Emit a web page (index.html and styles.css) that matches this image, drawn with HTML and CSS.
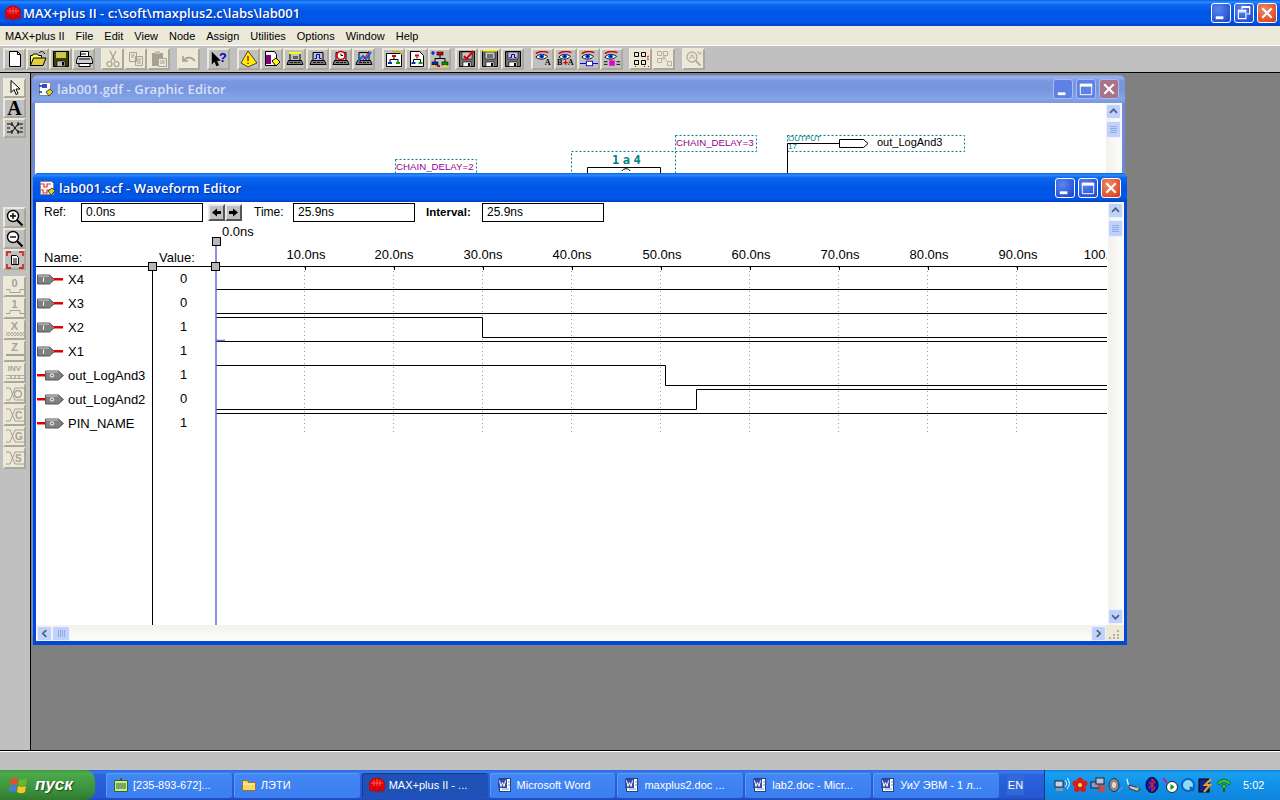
FILE: index.html
```html
<!DOCTYPE html>
<html lang="en">
<head>
    <meta charset="UTF-8">
    <title>MAX+plus II</title>
    <link rel="stylesheet" href="styles.css">
</head>
<body>

<!-- shared icon parts -->
<svg class="defs" width="0" height="0">
    <symbol id="i-chip" viewBox="0 0 16 16">
        <path d="M0 9C0 3 4 1 8 1s8 2 8 8l-1 5h-3l-1-4-1 5H6L5 10l-1 4H1z" fill="#e80000" stroke="#a00000" stroke-width=".5"/>
        <path d="M5 3v6M8 2v7M11 3v6M2 6h12" stroke="#ff8080" stroke-width=".7"/>
    </symbol>
    <symbol id="w-min" viewBox="0 0 19 19"><rect x="4" y="13" width="8" height="3" fill="#fff"/></symbol>
    <symbol id="w-max" viewBox="0 0 19 19"><path d="M3.500 4.500h12v11h-12z" fill="none" stroke="#fff"/><rect x="3" y="4" width="13" height="3" fill="#fff"/></symbol>
    <symbol id="w-restore" viewBox="0 0 19 19"><path d="M3.500 8.500h8v7h-8zM7.500 5.500v-2h8v7h-3" fill="none" stroke="#fff" stroke-width="1.200"/><path d="M3 7h9M7 3h9" stroke="#fff" stroke-width="2"/></symbol>
    <symbol id="w-close" viewBox="0 0 19 19"><path d="M4.500 4.500l10 10M14.500 4.500l-10 10" stroke="#fff" stroke-width="2.200"/></symbol>
    <symbol id="i-device" viewBox="0 0 18 18">
        <path d="M4 2.500h10v8H4z" fill="#c0c0c0" stroke="#000"/>
        <path d="M2.500 10.500h13l1.500 4H1z" fill="#808080" stroke="#000"/>
        <path d="M4 12.500h3M8 12.500h3M12 12.500h2" stroke="#111"/>
    </symbol>
    <symbol id="i-floppy" viewBox="0 0 18 18">
        <path d="M1.500 1.500h15v15h-15z" fill="#707070" stroke="#000"/>
        <rect x="4" y="2" width="10" height="7" fill="#c8c8c8" stroke="#000" stroke-width=".6"/>
        <rect x="5" y="12" width="8" height="4.500" fill="#fff" stroke="#000" stroke-width=".6"/>
        <rect x="10" y="13" width="2" height="3" fill="#000"/>
    </symbol>
    <symbol id="i-eye" viewBox="0 0 20 18">
        <path d="M2 3C6 0 12 0 16 2" fill="none" stroke="#d00000" stroke-width="1.600"/>
        <path d="M2 7C5 3 11 3 15 6c-3 4-9 4-13 1z" fill="#fff" stroke="#000"/>
        <circle cx="8.500" cy="6" r="2.600" fill="#0050e0"/><circle cx="8.500" cy="6" r="1" fill="#000"/>
    </symbol>
    <symbol id="i-tree" viewBox="0 0 18 18">
        <path d="M9 5v3M4 12V8.500h10V12" fill="none" stroke="#000"/>
        <rect x="6" y="2" width="6" height="3" fill="#e00000" stroke="#000" stroke-width=".6"/>
        <rect x="1" y="12" width="6" height="3" fill="#0030c0" stroke="#000" stroke-width=".6"/>
        <rect x="11" y="12" width="6" height="3" fill="#00a000" stroke="#000" stroke-width=".6"/>
    </symbol>
    <symbol id="i-word" viewBox="0 0 16 16">
        <rect x="2.500" y="1.500" width="11" height="13" fill="#fff" stroke="#29427e"/>
        <path d="M1 2h9v9H1z" fill="#2b4da8"/>
        <path d="M2.500 3.500l1.500 6 1.500-4 1.500 4 1.500-6" fill="none" stroke="#fff"/>
        <path d="M5 12h7M11 5h2M11 8h2" stroke="#7f8fb8"/>
    </symbol>
    <symbol id="p-in" viewBox="0 0 27 11">
        <path d="M.5 1h12l5 4.500-5 4.500H.5z" fill="#808080" stroke="#555"/>
        <path d="M1 2h11" stroke="#d0d0d0"/><path d="M6.500 3.500v4" stroke="#fff"/>
        <rect x="17" y="4" width="9" height="2.500" fill="#e00000"/>
    </symbol>
    <symbol id="p-out" viewBox="0 0 27 11">
        <rect x="0" y="4" width="9" height="2.500" fill="#e00000"/>
        <path d="M8.500 1h13l5 4.500-5 4.500h-13z" fill="#808080" stroke="#555"/>
        <path d="M9 2h12" stroke="#d0d0d0"/>
        <ellipse cx="15" cy="5.500" rx="1.800" ry="1.600" fill="none" stroke="#fff"/>
    </symbol>
</svg>

<header class="app-title">
    <svg class="ico16"><use href="#i-chip"/></svg>
    <span class="app-title-text">MAX+plus II - c:\soft\maxplus2.c\labs\lab001</span>
    <div class="win-btns">
        <a class="wbtn"><svg><use href="#w-min"/></svg></a>
        <a class="wbtn"><svg><use href="#w-restore"/></svg></a>
        <a class="wbtn close"><svg><use href="#w-close"/></svg></a>
    </div>
</header>

<nav class="menubar">
    <a>MAX+plus II</a><a>File</a><a>Edit</a><a>View</a><a>Node</a><a>Assign</a><a>Utilities</a><a>Options</a><a>Window</a><a>Help</a>
</nav>

<section class="toolbar">
    <div class="tb-group">
        <a class="tbtn"><svg viewBox="0 0 18 18"><path d="M3.500 1.500h8l3 3v12h-11z" fill="#fff" stroke="#000"/><path d="M11.500 1.500v3h3" fill="none" stroke="#000"/></svg></a>
        <a class="tbtn"><svg viewBox="0 0 18 18"><path d="M1.500 15.500v-10h2l1-1.500h4l1 1.500h3v2" fill="#ffff60" stroke="#000"/><path d="M1.500 15.500l3-7.500h12.500l-3 7.500z" fill="#e0d040" stroke="#000"/><path d="M10 3c2-2 4-2 5 0l1 1" fill="none" stroke="#000"/></svg></a>
        <a class="tbtn"><svg viewBox="0 0 18 18"><path d="M1.500 1.500h15v15h-15z" fill="#404000" stroke="#000"/><rect x="4" y="2" width="10" height="6" fill="#c8c850"/><rect x="5" y="11" width="8" height="5.500" fill="#c0c0c0" stroke="#000" stroke-width=".6"/><rect x="10" y="12" width="2" height="3.500" fill="#000"/></svg></a>
        <a class="tbtn"><svg viewBox="0 0 18 18"><path d="M5.500 1.500h8v5h-8z" fill="#fff" stroke="#000"/><path d="M3 6.500h13l1.500 4v3h-16v-3z" fill="#d0d0d0" stroke="#000"/><path d="M4 9h11M5 4h6" stroke="#000"/><path d="M4 13.500h11v3H4z" fill="#fff" stroke="#000"/></svg></a>
    </div>
    <div class="tb-group gap6">
        <a class="tbtn off"><svg viewBox="0 0 18 18"><path d="M6 1l5 10M12 1L7 11" stroke="#a5a293" fill="none" stroke-width="1.200"/><circle cx="5.500" cy="14" r="2.500" fill="none" stroke="#a5a293" stroke-width="1.200"/><circle cx="12.500" cy="14" r="2.500" fill="none" stroke="#a5a293" stroke-width="1.200"/></svg></a>
        <a class="tbtn off"><svg viewBox="0 0 18 18"><path d="M2.500 2.500h7v9h-7zM8.500 6.500h7v9h-7z" fill="#ece9d8" stroke="#a5a293"/><path d="M4 5h4M4 7h3M10 9h4M10 11h4M10 13h4" stroke="#a5a293"/></svg></a>
        <a class="tbtn off"><svg viewBox="0 0 18 18"><path d="M2 3h11v13H2z" fill="#a5a293"/><rect x="5" y="1" width="5" height="3" fill="#c5c2b3"/><path d="M8.500 8.500h8v8h-8z" fill="#ece9d8" stroke="#a5a293"/><path d="M10 11h5M10 13h5" stroke="#a5a293"/></svg></a>
    </div>
    <div class="tb-group">
        <a class="tbtn off"><svg viewBox="0 0 18 18"><path d="M3 6v5h5M3.500 11C6 7 11 6 15 11" fill="none" stroke="#a5a293" stroke-width="1.600"/></svg></a>
    </div>
    <div class="tb-group">
        <a class="tbtn"><svg viewBox="0 0 20 18"><path d="M2 1v14l3-3 2 5 3-1-2-5h4z" fill="#000"/><text class="tb-help" x="10" y="12">?</text></svg></a>
    </div>
    <div class="tb-group">
        <a class="tbtn"><svg viewBox="0 0 18 18"><path d="M8 1l9 12-9 4-7-4z" fill="#ffee00" stroke="#444"/><path d="M8 6v5M8 12.500v1.500" stroke="#c00000" stroke-width="1.400"/></svg></a>
        <a class="tbtn"><svg viewBox="0 0 18 18"><path d="M2.500 1.500h9l2 3v11h-11z" fill="#fff" stroke="#000"/><rect x="3" y="5" width="5" height="9" fill="#800080"/><path d="M9 11l4-3 4 4-4 4z" fill="#ffff00" stroke="#000"/></svg></a>
        <a class="tbtn"><svg viewBox="0 0 18 18"><use href="#i-device"/><path d="M3 3h12" stroke="#ffff00" stroke-width="2"/><path d="M7 6h5v3H7z" fill="#606060"/></svg></a>
        <a class="tbtn"><svg viewBox="0 0 18 18"><use href="#i-device"/><path d="M5.500 8.500h2v-4h3v4h2" fill="none" stroke="#0000d0"/></svg></a>
        <a class="tbtn"><svg viewBox="0 0 18 18"><use href="#i-device"/><circle cx="9" cy="5.500" r="4" fill="#fff" stroke="#e00000" stroke-width="1.600"/><path d="M9 3.500v2h2" stroke="#000" fill="none"/></svg></a>
        <a class="tbtn"><svg viewBox="0 0 18 18"><use href="#i-device"/><path d="M3 11l5-5 3 3 5-7" fill="none" stroke="#0060f0" stroke-width="1.800"/><path d="M5 12l5-4 4-7" fill="none" stroke="#e00000"/></svg></a>
    </div>
    <div class="tb-group gap0">
        <a class="tbtn"><svg viewBox="0 0 18 18"><path d="M1.500 3.500h15v13h-15z" fill="#fff" stroke="#000"/><path d="M7 1.500h7l3 3" fill="none" stroke="#c8b400" stroke-width="1.400"/><path d="M9 7v2M5 12v-2.500h8V12" fill="none" stroke="#000"/><rect x="7" y="5" width="4" height="2" fill="#e00000"/><rect x="3" y="12" width="4" height="2" fill="#0030c0"/><rect x="11" y="12" width="4" height="2" fill="#00a000"/></svg></a>
        <a class="tbtn"><svg viewBox="0 0 18 18"><path d="M2.500 1.500h9l4 4v11h-13z" fill="#fff" stroke="#000"/><path d="M9 6.500v2M5.500 12v-2.500h7V12" fill="none" stroke="#000"/><rect x="7" y="4.500" width="4" height="2" fill="#e00000"/><rect x="3.500" y="12" width="4" height="2" fill="#0030c0"/><rect x="10.500" y="12" width="4" height="2" fill="#00a000"/></svg></a>
        <a class="tbtn"><svg viewBox="0 0 18 18"><use href="#i-tree"/><path d="M0 3h4M2 1v4" stroke="#0000e0" stroke-width="1.200"/><rect x="1" y="15" width="3" height="2" fill="#ffd000"/><rect x="6" y="15" width="3" height="2" fill="#e00000"/><rect x="12" y="15" width="4" height="2" fill="#ffd000"/></svg></a>
    </div>
    <div class="tb-group gap4">
        <a class="tbtn"><svg viewBox="0 0 18 18"><use href="#i-floppy"/><path d="M6 6l2.500 3L15 1" fill="none" stroke="#e00000" stroke-width="2"/></svg></a>
        <a class="tbtn"><svg viewBox="0 0 18 18"><use href="#i-floppy"/><path d="M2 1h14" stroke="#ffff00" stroke-width="1.400"/><path d="M6 4h6v4H6z" fill="#707070"/></svg></a>
        <a class="tbtn"><svg viewBox="0 0 18 18"><use href="#i-floppy"/><path d="M5.500 7.500h2v-3h3v3h2" fill="none" stroke="#0000d0"/></svg></a>
    </div>
    <div class="tb-group">
        <a class="tbtn"><svg viewBox="0 0 20 18"><use href="#i-eye"/><text class="tb-a" x="12" y="16">A</text></svg></a>
        <a class="tbtn"><svg viewBox="0 0 20 18"><use href="#i-eye"/><text class="tb-a" x="0" y="16">B</text><path d="M7 13h5M9.500 10.500v5" stroke="#e00000" stroke-width="1.600"/><text class="tb-a" x="12" y="16">A</text></svg></a>
        <a class="tbtn"><svg viewBox="0 0 20 18"><use href="#i-eye"/><path d="M0 14h7M14 14h6" stroke="#0000e0" stroke-width="1.200"/><rect x="7" y="11.500" width="7" height="5" fill="#fff" stroke="#0000e0"/></svg></a>
        <a class="tbtn"><svg viewBox="0 0 20 18"><use href="#i-eye"/><rect x="7" y="10.500" width="6" height="6" fill="#e000d0"/><path d="M1 12h4M1 15h4M15 12h4M15 15h4" stroke="#000"/></svg></a>
    </div>
    <div class="tb-group gap6">
        <a class="tbtn off"><svg viewBox="0 0 18 18"><path d="M2.500 2.500h4v4h-4zM9.500 2.500h4v4h-4zM2.500 10.500h4v4h-4zM9.500 10.500h4v4h-4z" fill="none" stroke="#000"/><path d="M15 7l2-1M15 9h2M3 17l1-1M12 16l1 1M16 16l1 1" stroke="#e00000"/></svg></a>
        <a class="tbtn off pale"><svg viewBox="0 0 18 18"><path d="M2.500 1.500h4v4h-4zM8.500 1.500h4v4h-4zM2.500 8.500h4v4h-4zM12.500 11.500h4v4h-4z" fill="none" stroke="#a5a293"/><path d="M8 7l4 4M8 7v3M8 7h3" stroke="#a5a293" fill="none"/></svg></a>
    </div>
    <div class="tb-group">
        <a class="tbtn off pale"><svg viewBox="0 0 18 18"><circle cx="7" cy="7" r="5" fill="none" stroke="#a5a293" stroke-width="1.400"/><path d="M10.500 10.500l5 5" stroke="#a5a293" stroke-width="2"/><path d="M4 8h2V5h2v3h2M12 2h2v2h2V2" fill="none" stroke="#a5a293"/></svg></a>
    </div>
</section>

<main class="workspace">
    <aside class="palette">
        <div class="pal-group first">
            <a class="tbtn off"><svg viewBox="0 0 18 18"><path d="M5 1.500v12l3-3 2 5 2-1-2-4.500h4z" fill="#fff" stroke="#000"/></svg></a>
            <a class="tbtn"><span class="pal-a">A</span></a>
            <a class="tbtn"><svg viewBox="0 0 18 18"><path d="M1 5h5l6 8h5M1 13h5l6-8h5M1 9h3M14 9h3" fill="none" stroke="#000"/><path d="M6 3v4M12 11v4M12 3v4M6 11v4" stroke="#000"/></svg></a>
        </div>
        <div class="pal-group second">
            <a class="tbtn"><svg viewBox="0 0 18 18"><circle cx="7" cy="7" r="5.500" fill="#fff" stroke="#000" stroke-width="1.400"/><path d="M11 11l5.500 5.500" stroke="#000" stroke-width="2.200"/><path d="M4 7h6M7 4v6" stroke="#000" stroke-width="1.400"/></svg></a>
            <a class="tbtn"><svg viewBox="0 0 18 18"><circle cx="7" cy="7" r="5.500" fill="#fff" stroke="#000" stroke-width="1.400"/><path d="M11 11l5.500 5.500" stroke="#000" stroke-width="2.200"/><path d="M4 7h6" stroke="#000" stroke-width="1.400"/></svg></a>
            <a class="tbtn"><svg viewBox="0 0 18 18"><path d="M5.500 4.500h5l2 2v7h-7z" fill="#fff" stroke="#000"/><path d="M7 8h4M7 10h4M7 12h4" stroke="#000"/><path d="M1 5V1h4M13 1h4v4M1 13v4h4M17 13v4h-4" fill="none" stroke="#e00000" stroke-width="1.400"/></svg></a>
        </div>
        <div class="pal-group third">
            <a class="tbtn off wave"><b>0</b><svg viewBox="0 0 18 6"><path d="M0 1.500h4v3h10v-3h4" fill="none" stroke="#a5a293"/></svg></a>
            <a class="tbtn off wave"><b>1</b><svg viewBox="0 0 18 6"><path d="M0 4.500h4v-3h10v3h4" fill="none" stroke="#a5a293"/></svg></a>
            <a class="tbtn off wave"><b>X</b><svg viewBox="0 0 18 6"><path d="M0 1l3 4 3-4 3 4 3-4 3 4 3-4M0 5l3-4 3 4 3-4 3 4 3-4 3 4" fill="none" stroke="#a5a293" stroke-width=".8"/></svg></a>
            <a class="tbtn off wave"><b>Z</b><svg viewBox="0 0 18 6"><path d="M0 3h18" stroke="#a5a293" stroke-width="2"/></svg></a>
            <a class="tbtn off wave"><b class="inv">INV</b><svg viewBox="0 0 18 6"><path d="M0 1.500h5v3h4v-3h4v3h5M0 4.500h5v-3h4v3h4v-3h5" fill="none" stroke="#a5a293" stroke-width=".8"/></svg></a>
            <a class="tbtn off"><svg viewBox="0 0 18 18"><path d="M0 3h4l5 12h9M0 15h4l5-12h9" fill="none" stroke="#a5a293"/><circle cx="12" cy="9" r="3.500" fill="none" stroke="#a5a293" stroke-width="1.400"/></svg></a>
            <a class="tbtn off"><svg viewBox="0 0 18 18"><path d="M0 3h4l5 12h9M0 15h4l5-12h9" fill="none" stroke="#a5a293"/><text class="pal-x" x="9" y="13">C</text></svg></a>
            <a class="tbtn off"><svg viewBox="0 0 18 18"><path d="M0 3h4l5 12h9M0 15h4l5-12h9" fill="none" stroke="#a5a293"/><text class="pal-x" x="9" y="13">G</text></svg></a>
            <a class="tbtn off"><svg viewBox="0 0 18 18"><path d="M0 3h4l5 12h9M0 15h4l5-12h9" fill="none" stroke="#a5a293"/><text class="pal-x" x="9" y="13">S</text></svg></a>
        </div>
    </aside>

    <div class="mdi">
        <!-- window behind -->
        <section class="win win-gdf inactive">
            <div class="win-title">
                <svg class="ico16" viewBox="0 0 16 16"><path d="M2.500 1.500h11v13h-11z" fill="#fff" stroke="#888"/><path d="M2 5h3M2 11h3" stroke="#0030c0" stroke-width="1.600"/><rect x="5" y="3" width="5" height="4" fill="#3050c0"/><path d="M9 11l4-3 3 3-4 4z" fill="#e0d020" stroke="#444"/></svg>
                <span class="win-title-text">lab001.gdf - Graphic Editor</span>
                <div class="win-btns">
                    <a class="wbtn"><svg><use href="#w-min"/></svg></a>
                    <a class="wbtn"><svg><use href="#w-max"/></svg></a>
                    <a class="wbtn close"><svg><use href="#w-close"/></svg></a>
                </div>
            </div>
            <div class="win-body">
                <svg class="gdf-canvas" viewBox="35 103 1071 530">
                    <g class="dots">
                        <rect x="395.500" y="159.500" width="81" height="30"/>
                        <rect x="571.500" y="151.500" width="104" height="40"/>
                        <rect x="675.500" y="135.500" width="81" height="16"/>
                        <rect x="787.500" y="135.500" width="177" height="16"/>
                    </g>
                    <text class="gdf-param" x="396" y="170">CHAIN_DELAY=2</text>
                    <text class="gdf-param" x="676" y="146">CHAIN_DELAY=3</text>
                    <text class="gdf-inst" x="612" y="164">1a4</text>
                    <path d="M587.500 190v-22.500h73V190M622 171c1-3 7-3 8 0" class="gdf-line"/>
                    <text class="gdf-pin" x="788" y="141">OUTPUT</text>
                    <text class="gdf-pin" x="788" y="149">17</text>
                    <path d="M787.500 190v-46.500h52M839.500 139.500h24l4.500 4-4.500 4h-24z" class="gdf-line"/>
                    <text class="gdf-name" x="877" y="146">out_LogAnd3</text>
                </svg>
                <div class="vscroll">
                    <a class="sbtn"><svg viewBox="0 0 15 15"><path d="M3.500 9l4-4 4 4" fill="none" stroke="#4d6185" stroke-width="2"/></svg></a>
                    <a class="sthumb"></a>
                </div>
            </div>
        </section>

        <!-- active window -->
        <section class="win win-scf">
            <div class="win-title">
                <svg class="ico16" viewBox="0 0 16 16"><path d="M1.500 1.500h11l2 2v11h-13z" fill="#fff" stroke="#888"/><path d="M2 4h3v3h3V4h4M2 10h2v3h4v-3h4" fill="none" stroke="#e03030" stroke-width="1.200"/><path d="M9 11l4-3 3 3-4 4z" fill="#e0d020" stroke="#444"/></svg>
                <span class="win-title-text">lab001.scf - Waveform Editor</span>
                <div class="win-btns">
                    <a class="wbtn"><svg><use href="#w-min"/></svg></a>
                    <a class="wbtn"><svg><use href="#w-max"/></svg></a>
                    <a class="wbtn close"><svg><use href="#w-close"/></svg></a>
                </div>
            </div>
            <div class="win-body column">
                <div class="scf-main">
                    <div class="wave-pane">
                        <div class="refbar">
                            <label class="lbl-ref">Ref:</label>
                            <div class="field">0.0ns</div>
                            <a class="step"><svg viewBox="0 0 13 13"><path d="M2 6.500l5-4v2.500h4v3H7v2.500z"/></svg></a>
                            <a class="step"><svg viewBox="0 0 13 13"><path d="M11 6.500l-5-4v2.500H2v3h4v2.500z"/></svg></a>
                            <label class="lbl-time">Time:</label>
                            <div class="field">25.9ns</div>
                            <label class="lbl-int">Interval:</label>
                            <div class="field">25.9ns</div>
                        </div>
                        <div class="col-heads">
                            <span class="head-name">Name:</span>
                            <span class="head-value">Value:</span>
                        </div>
                        <div class="signals">
                            <div class="names">
                                <div class="sig"><svg class="pin"><use href="#p-in"/></svg>X4</div>
                                <div class="sig"><svg class="pin"><use href="#p-in"/></svg>X3</div>
                                <div class="sig"><svg class="pin"><use href="#p-in"/></svg>X2</div>
                                <div class="sig"><svg class="pin"><use href="#p-in"/></svg>X1</div>
                                <div class="sig"><svg class="pin"><use href="#p-out"/></svg>out_LogAnd3</div>
                                <div class="sig"><svg class="pin"><use href="#p-out"/></svg>out_LogAnd2</div>
                                <div class="sig"><svg class="pin"><use href="#p-out"/></svg>PIN_NAME</div>
                            </div>
                            <div class="values">
                                <div>0</div><div>0</div><div>1</div><div>1</div><div>1</div><div>0</div><div>1</div>
                            </div>
                        </div>
                        <!-- timing diagram, coordinates are screen pixels -->
                        <svg class="traces" viewBox="36 202 1071 423">
                            <g class="grid">
                                <path d="M304.500 267v166M393.500 267v166M482.500 267v166M571.500 267v166M660.500 267v166M749.500 267v166M838.500 267v166M927.500 267v166M1016.500 267v166"/>
                            </g>
                            <path class="wire" d="M36 266.500h1071M305.500 266v4M394.500 266v4M483.500 266v4M572.500 266v4M661.500 266v4M750.500 266v4M839.500 266v4M928.500 266v4M1017.500 266v4"/>
                            <g class="ticks">
                                <text x="306" y="259">10.0ns</text><text x="394" y="259">20.0ns</text><text x="483" y="259">30.0ns</text>
                                <text x="572" y="259">40.0ns</text><text x="662" y="259">50.0ns</text><text x="751" y="259">60.0ns</text>
                                <text x="840" y="259">70.0ns</text><text x="929" y="259">80.0ns</text><text x="1018" y="259">90.0ns</text>
                                <text x="1107" y="259">100.0ns</text>
                            </g>
                            <path class="wire" d="M216 289.500h891M216 313.500h891M216 317.500h266.500v20h624.500M216 341.500h891M216 365.500h449.500v20h441.500M216 409.500h480.500v-20h410.500M216 413.500h891"/>
                            <path class="cursor" d="M216 246v379M216 340.500h9"/>
                            <text class="cur-label" x="222" y="236">0.0ns</text>
                            <rect class="handle" x="212.500" y="237.500" width="8" height="8"/>
                            <rect class="handle" x="148.500" y="262.500" width="8" height="8"/>
                            <rect class="handle" x="211.500" y="262.500" width="8" height="8"/>
                        </svg>
                    </div>
                    <div class="vscroll">
                        <a class="sbtn"><svg viewBox="0 0 15 15"><path d="M3.500 9l4-4 4 4" fill="none" stroke="#4d6185" stroke-width="2"/></svg></a>
                        <a class="sthumb"></a>
                        <a class="sbtn bottom"><svg viewBox="0 0 15 15"><path d="M3.500 6l4 4 4-4" fill="none" stroke="#4d6185" stroke-width="2"/></svg></a>
                    </div>
                </div>
                <div class="hscroll">
                    <a class="sbtn"><svg viewBox="0 0 15 15"><path d="M9.500 3.500l-4 4 4 4" fill="none" stroke="#4d6185" stroke-width="2"/></svg></a>
                    <a class="sthumb wide"></a>
                    <a class="sbtn right"><svg viewBox="0 0 15 15"><path d="M5.500 3.500l4 4-4 4" fill="none" stroke="#4d6185" stroke-width="2"/></svg></a>
                    <div class="grip"><svg viewBox="0 0 16 15"><path d="M11 5h2v2h-2zM7 9h2v2H7zM11 9h2v2h-2zM3 12h2v2H3zM7 12h2v2H7zM11 12h2v2h-2z" fill="#b5b29f"/></svg></div>
                </div>
            </div>
        </section>
    </div>
</main>

<div class="statusbar"></div>

<footer class="taskbar">
    <a class="start">
        <svg viewBox="0 0 20 20"><path d="M2 4c3-2 5-1 7 0l-1 6c-2-1-5-1-7 0z" fill="#e8502a"/><path d="M10 4c2 1 5 1 8-1l-1 7c-3 1-6 1-8 0z" fill="#6ab82c"/><path d="M1 11c2-1 5-1 7 0l-1 6c-2-1-5-1-7 0z" fill="#3e7ce8"/><path d="M9 11c2 1 5 1 8 0l-1 6c-3 2-6 1-8 0z" fill="#f6c81c"/></svg>
        <span>пуск</span>
    </a>
    <div class="task-items">
        <a class="task"><svg viewBox="0 0 16 16"><path d="M1.500 3.500h13v11h-13z" fill="#c8e8a0" stroke="#2a6a20"/><path d="M3 7h10M3 9h10M3 11h10" stroke="#2a6a20"/><rect x="7" y="1" width="2" height="3" fill="#2a6a20"/></svg><span>[235-893-672]...</span></a>
        <a class="task"><svg viewBox="0 0 16 16"><path d="M1.500 13.500v-10h5l1 2h7v8z" fill="#f6d66a" stroke="#96762a"/><path d="M2 7h12" stroke="#fff3b8"/></svg><span>ЛЭТИ</span></a>
        <a class="task active"><svg><use href="#i-chip"/></svg><span>MAX+plus II - ...</span></a>
        <a class="task"><svg><use href="#i-word"/></svg><span>Microsoft Word</span></a>
        <a class="task"><svg><use href="#i-word"/></svg><span>maxplus2.doc ...</span></a>
        <a class="task"><svg><use href="#i-word"/></svg><span>lab2.doc - Micr...</span></a>
        <a class="task"><svg><use href="#i-word"/></svg><span>УиУ ЭВМ - 1 л...</span></a>
    </div>
    <span class="lang">EN</span>
    <div class="tray">
        <svg viewBox="0 0 16 16"><rect x="1" y="4" width="8" height="6" fill="#c8d4e8" stroke="#223"/><rect x="2" y="11" width="7" height="3" fill="#8a94a8"/><path d="M11 3c2 2 2 5 0 7M13 1c3 3 3 8 0 11" fill="none" stroke="#fff"/></svg>
        <svg viewBox="0 0 16 16"><circle cx="8" cy="3.500" r="3" fill="#e01818"/><circle cx="12.500" cy="6.500" r="3" fill="#e01818"/><circle cx="11" cy="12" r="3" fill="#e01818"/><circle cx="5" cy="12" r="3" fill="#e01818"/><circle cx="3.500" cy="6.500" r="3" fill="#e01818"/><circle cx="8" cy="8" r="2" fill="#ffe020"/></svg>
        <svg viewBox="0 0 16 16"><rect x="1" y="5" width="8" height="6" fill="#8a98c8" stroke="#223"/><rect x="6" y="1" width="8" height="6" fill="#b8c4e0" stroke="#223"/><path d="M8 8l7 7M15 8l-7 7" stroke="#e84020" stroke-width="2.200"/></svg>
        <svg viewBox="0 0 16 16"><ellipse cx="6" cy="8" rx="5" ry="6.500" fill="#8a8a8a" stroke="#333"/><ellipse cx="6" cy="8" rx="2" ry="3" fill="#ddd"/><path d="M10 15l5-5" stroke="#7a9ae8"/></svg>
        <svg viewBox="0 0 18 16"><path d="M1 1l2 8 7 3" fill="none" stroke="#fff" stroke-width="1.400"/><path d="M3 8l7 2 6 3-4 2-8-3z" fill="#c8c8c8" stroke="#222"/><rect x="11" y="11" width="3" height="2" fill="#e0d020"/></svg>
        <svg viewBox="0 0 16 16"><ellipse cx="8" cy="8" rx="6" ry="7.500" fill="#0018c8" stroke="#000"/><path d="M5 5l6 6-3 3V2l3 3-6 6" fill="none" stroke="#e02020" stroke-width="1.200"/></svg>
        <svg viewBox="0 0 16 16"><circle cx="10" cy="10" r="5.500" fill="#fff" stroke="#222"/><path d="M8.500 7v6l4-3z" fill="#109010"/><path d="M1 1l4 5" stroke="#d01090" stroke-width="2"/></svg>
        <svg viewBox="0 0 16 16"><circle cx="8" cy="8" r="6" fill="#8adcf8" stroke="#1060c0" stroke-width="2"/><path d="M10 10l4 4" stroke="#1060c0" stroke-width="2.400"/></svg>
        <svg viewBox="0 0 16 16"><rect x="1" y="2" width="10" height="13" fill="#14248a" stroke="#000"/><path d="M13 2L7 8h5l-6 7" fill="none" stroke="#f0a020" stroke-width="2"/></svg>
        <svg viewBox="0 0 16 16"><path d="M1 6c4-5 10-5 14 0l-2 2C10 5 6 5 3 8z" fill="#30c030" stroke="#0a4a0a" stroke-width=".6"/><path d="M5 9c2-2 4-2 6 0l-3 3z" fill="#30c030" stroke="#0a4a0a" stroke-width=".6"/><rect x="7" y="11" width="2" height="4" fill="#0a6a0a"/></svg>
        <span class="clock">5:02</span>
    </div>
</footer>

</body>
</html>
```

FILE: styles.css
```css
*{
    box-sizing: border-box;
    margin: 0;
    padding: 0;
}
body{
    width: 1280px;
    height: 800px;
    overflow: hidden;
    display: flex;
    flex-direction: column;
    font-family: "Liberation Sans", Arial, sans-serif;
    font-size: 12px;
    color: #000;
    background: #808080;
}
.defs{position: absolute;}
.ico16{width: 16px; height: 16px; flex: none;}

/* application title */
.app-title{
    height: 26px;
    flex: none;
    display: flex;
    align-items: center;
    padding: 0 3px 0 5px;
    background: linear-gradient(#0a5ce8 0, #2a8cff 2px, #0a64ee 5px, #0055e5 50%, #0058ea 80%, #0040c8 100%);
}
.app-title-text,
.win-title-text{
    margin-left: 2px;
    font-family: "Open Sans", sans-serif;
    font-size: 13px;
    font-weight: 600;
    color: #fff;
    text-shadow: 1px 1px 1px #0a2a90;
    white-space: nowrap;
}
.win-btns{
    margin-left: auto;
    display: flex;
    gap: 3px;
}
.wbtn{
    width: 20px;
    height: 20px;
    border: 1px solid #fff;
    border-radius: 3px;
    background: radial-gradient(circle at 35% 30%, #5a86ee, #2a55d8 70%, #1e44c0);
}
.wbtn svg{display: block; width: 18px; height: 18px;}
.wbtn.close{background: radial-gradient(circle at 35% 30%, #ee8a66, #e0502a 70%, #c83a18);}

/* menu and tools */
.menubar{
    height: 19px;
    flex: none;
    display: flex;
    align-items: center;
    gap: 11px;
    padding-left: 5px;
    background: #ece9d8;
    font-size: 11px;
}
.toolbar{
    height: 28px;
    flex: none;
    display: flex;
    gap: 7px;
    padding: 2px 0 0 3px;
    background: #c0c0c0;
    border-top: 1px solid #fff;
    border-bottom: 1px solid #000;
}
.tb-group{display: flex;}
.tb-group.gap6{margin-left: -1px;}
.tb-group.gap0{margin-left: 0;}
.tb-group.gap4{margin-left: -3px;}
.tbtn{
    width: 23px;
    height: 22px;
    flex: none;
    display: flex;
    align-items: center;
    justify-content: center;
    background: #c0c0c0;
    border: 2px solid;
    border-color: #ece9d8 #aca899 #aca899 #ece9d8;
}
.tbtn svg{width: 18px; height: 18px; display: block; overflow: visible;}
.tbtn.off{background: #ece9d8;}
.tbtn.pale svg{opacity: .8;}
.tb-help{font: bold 14px "Liberation Sans", sans-serif; fill: #0000c0;}
.tb-a{font: bold 9px "Liberation Serif", serif; fill: #000;}

/* workspace */
.workspace{
    flex: 1;
    min-height: 0;
    display: flex;
}
.palette{
    width: 31px;
    flex: none;
    background: #c0c0c0;
    border-right: 1px solid #000;
}
.pal-group{
    display: flex;
    flex-direction: column;
    padding-left: 3px;
}
.pal-group .tbtn{height: 21px;}
.pal-group.first{padding-top: 5px;}
.pal-group.first .tbtn{height: 20px;}
.pal-group.second{margin-top: 69px;}
.pal-group.third{margin-top: 6px;}
.pal-group.third .tbtn{height: 21.400px;}
.pal-a{font: bold 20px/16px "Liberation Serif", serif;}
.pal-x{font: bold 10px "Liberation Sans", sans-serif; fill: #a5a293;}
.tbtn.wave{flex-direction: column; justify-content: flex-start;}
.tbtn.wave b{font-size: 11px; line-height: 10px; color: #a5a293;}
.tbtn.wave b.inv{font-size: 8px;}
.tbtn.wave svg{height: 6px;}

/* desktop with the child windows */
.mdi{
    flex: 1;
    position: relative;
    background: #808080;
}
.win{
    position: absolute;
    display: flex;
    flex-direction: column;
    border: 3px solid #0048d8;
    border-top: none;
    border-radius: 6px 6px 0 0;
    background: #0048d8;
}
.win-gdf{
    left: 1px;
    top: 2px;
    width: 1093px;
    height: 560px;
    background: #7a96df;
    border-color: #6f88d8;
}
.win-scf{
    left: 2px;
    top: 100px;
    width: 1094px;
    height: 472px;
    border-color: #0048d8;
    border-bottom-width: 4px;
    box-shadow: inset 0 0 0 1px #0030b0;
}
.win-title{
    height: 29px;
    flex: none;
    display: flex;
    align-items: center;
    margin: 0 -3px;
    padding: 1px 6px 0 6px;
    border-radius: 6px 6px 0 0;
    background: linear-gradient(#0a5ce8 0, #2a8cff 2px, #0a64ee 5px, #0055e5 50%, #0058ea 85%, #0040c8 100%);
}
.win-title .win-title-text{margin-left: 4px; letter-spacing: .1px;}
.inactive .win-title{
    height: 28px;
    padding: 0 6px 0 5px;
    background: linear-gradient(#7a96df 0, #9ab4ee 2px, #7a96e0 6px, #7795df 50%, #82a4e8 85%, #7a96df 100%);
}
.inactive .win-title-text{color: #d8e0f4; text-shadow: none;}
.inactive .wbtn{
    background: #5f80e4;
    border-color: #a8bcf0;
}
.inactive .wbtn.close{background: #aa7288;}
.win-body{
    flex: 1;
    min-height: 0;
    display: flex;
    background: #fff;
}
.win-body.column{flex-direction: column;}
.gdf-canvas{
    width: 1071px;
    height: 530px;
    flex: none;
}
.dots rect{
    fill: none;
    stroke: #008080;
    stroke-dasharray: 2 2;
}
.gdf-param{font-size: 9.700px; fill: #900090;}
.gdf-inst{font: bold 12px "DejaVu Sans Mono", monospace; letter-spacing: 3.500px; fill: #008080;}
.gdf-pin{font-size: 8px; fill: #008080;}
.gdf-name{font-size: 11px;}
.gdf-line{fill: none; stroke: #000;}

/* scroll bars */
.vscroll{
    width: 16px;
    flex: none;
    display: flex;
    flex-direction: column;
    gap: 2px;
    padding-top: 1px;
    background: linear-gradient(90deg, #f3f1ec, #fdfdfa);
}
.sbtn{
    width: 15px;
    height: 15px;
    flex: none;
    display: block;
    border: 1px solid #eef2fd;
    border-radius: 2px;
    background: #c1d2fa;
}
.sbtn svg{display: block; width: 13px; height: 13px;}
.sbtn.bottom{margin-top: auto; margin-bottom: 1px;}
.sbtn.right{margin-left: auto;}
.sthumb{
    width: 15px;
    height: 17px;
    flex: none;
    border: 1px solid #eef2fd;
    border-radius: 2px;
    background: repeating-linear-gradient(#8faae8 0 1px, transparent 1px 2px) center / 7px 7px no-repeat #c1d2fa;
}
.sthumb.wide{
    width: 18px;
    height: 15px;
    background: repeating-linear-gradient(90deg, #8faae8 0 1px, transparent 1px 2px) center / 7px 7px no-repeat #c1d2fa;
}
.hscroll{
    height: 16px;
    flex: none;
    display: flex;
    align-items: center;
    padding-left: 1px;
    background: linear-gradient(#f3f1ec, #fdfdfa);
}
.grip{
    width: 18px;
    height: 16px;
    flex: none;
    background: #ece9d8;
}
.grip svg{display: block; width: 16px; height: 15px;}

/* waveform editor */
.scf-main{
    flex: 1;
    min-height: 0;
    display: flex;
}
.wave-pane{
    flex: 1;
    position: relative;
    display: flex;
    flex-direction: column;
}
.refbar{
    height: 24px;
    flex: none;
    display: flex;
    align-items: flex-start;
    padding: 1px 0 0 8px;
}
.refbar label{line-height: 19px;}
.lbl-ref{width: 37px;}
.lbl-time{width: 39px; margin-left: 12px;}
.lbl-int{width: 56px; margin-left: 11px; font-weight: bold; font-size: 11.500px;}
.field{
    width: 122px;
    height: 19px;
    border: 1px solid #000;
    padding-left: 4px;
    line-height: 17px;
}
.field + .step{margin-left: 5px;}
.step{
    width: 17px;
    height: 17px;
    margin-top: 1px;
    border: 2px solid;
    border-color: #e8e8e8 #555 #555 #e8e8e8;
    background: #c0c0c0;
}
.step svg{display: block; width: 13px; height: 13px;}
.col-heads{
    height: 41px;
    flex: none;
    display: flex;
    align-items: flex-end;
    padding: 0 0 2px 8px;
    font-size: 13px;
}
.head-name{width: 115px;}
.signals{
    flex: 1;
    display: flex;
    font-size: 13px;
}
.names{
    width: 117px;
    flex: none;
    border-right: 1px solid #000;
}
.sig{
    height: 24px;
    display: flex;
    align-items: center;
    white-space: nowrap;
}
.pin{
    width: 27px;
    height: 11px;
    flex: none;
    margin: 0 4px 0 1px;
}
.values{
    width: 61px;
    flex: none;
    text-align: center;
}
.values div{
    height: 24px;
    line-height: 24px;
}
.traces{
    position: absolute;
    left: 0;
    top: 0;
    width: 1071px;
    height: 423px;
}
.grid path{
    fill: none;
    stroke: #a0a0a0;
    stroke-dasharray: 1 3;
}
.wire{fill: none; stroke: #000;}
.ticks text{font-size: 13px; text-anchor: middle; fill: #000;}
.cur-label{font-size: 13px;}
.cursor{fill: none; stroke: #6a6ad8; stroke-width: 1.500;}
.handle{fill: #b8b8b8; stroke: #000;}

/* bottom */
.statusbar{
    height: 20px;
    flex: none;
    background: #c0c0c0;
    border-top: 1px solid #000;
    box-shadow: inset 0 1px #fff;
}
.taskbar{
    height: 30px;
    flex: none;
    display: flex;
    align-items: center;
    background: linear-gradient(#2a62dc 0, #3a7ce8 2px, #2a62dc 5px, #2658d2 90%, #1e48b8 100%);
    color: #fff;
    font-size: 11px;
}
.start{
    width: 95px;
    height: 30px;
    flex: none;
    display: flex;
    align-items: center;
    gap: 6px;
    padding-left: 9px;
    border-radius: 0 10px 10px 0;
    background: linear-gradient(#3c9a3c 0, #4caa4c 10%, #3a8e3a 70%, #2e7a2e 100%);
}
.start svg{width: 20px; height: 20px; flex: none;}
.start span{
    font-size: 17px;
    font-weight: bold;
    font-style: italic;
    text-shadow: 1px 1px 1px #1a4a1a;
}
.task-items{
    width: 893px;
    flex: none;
    margin-left: 11px;
    display: grid;
    grid-template-columns: repeat(7, 1fr);
    gap: 2px;
}
.task{
    height: 25px;
    display: flex;
    align-items: center;
    gap: 4px;
    padding-left: 7px;
    overflow: hidden;
    white-space: nowrap;
    border-radius: 3px;
    background: linear-gradient(#4488f4, #3a7ef0);
    box-shadow: inset 1px 1px #5a9af8;
}
.task svg{width: 16px; height: 16px; flex: none;}
.task.active{
    background: #1e52b7;
    box-shadow: inset 1px 1px #123a90;
}
.lang{
    margin-left: 8px;
    width: 17px;
    height: 20px;
    line-height: 20px;
    text-align: center;
    background: #2f6ad8;
}
.tray{
    margin-left: 20px;
    flex: 1;
    height: 30px;
    display: flex;
    align-items: center;
    gap: 2px;
    padding-left: 9px;
    background: linear-gradient(#0f86dc 0, #1aa0f0 3px, #1290e8 50%, #0f84dc 100%);
    border-left: 1px solid #0a3a90;
}
.tray svg{width: 16px; height: 16px; flex: none;}
.clock{margin-left: 9px;}
```
